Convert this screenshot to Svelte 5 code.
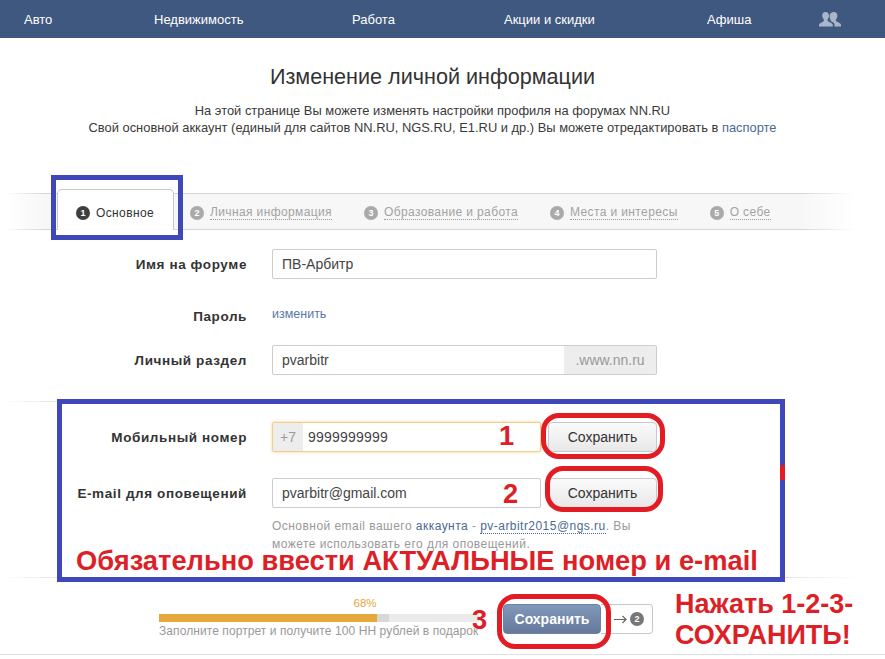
<script lang="ts">
    const navItems = [
        { label: 'Авто', width: 130 },
        { label: 'Недвижимость', width: 198 },
        { label: 'Работа', width: 152 },
        { label: 'Акции и скидки', width: 203 },
        { label: 'Афиша', width: 112 }
    ];

    const tabs = ['Личная информация', 'Образование и работа', 'Места и интересы', 'О себе'];
    const progress = 68;
</script>

<div class="page">
    <nav class="nav">
        {#each navItems as item}
            <span class="nav-item" style="width: {item.width}px">{item.label}</span>
        {/each}
        <svg class="nav-icon" width="22" height="16" viewBox="0 0 22 16" fill="#a9b6ca">
            <path d="M6.5 1c2.2 0 3.5 1.700 3.500 3.800 0 1.500-.6 2.800-1.400 3.700v1.500l4 2.200c.8.400 1.200 1 1.200 1.800v1.500H0v-1.500c0-.8.400-1.400 1.200-1.800l3.700-2.200V8.500C4 7.600 3.200 6.300 3.200 4.800 3.200 2.700 4.300 1 6.500 1z"/>
            <path d="M15 1c2.200 0 3.400 1.700 3.400 3.800 0 1.500-.7 2.800-1.500 3.700v1.500l3.900 2.200c.8.400 1.200 1 1.200 1.800v1.500h-6.500v-2c0-1-.6-1.700-1.500-2.200l-2.400-1.400V8.500c-.7-.9-1-2.200-1-3.700C10.600 2.700 12.800 1 15 1z"/>
        </svg>
    </nav>

    <header class="intro">
        <h1>Изменение личной информации</h1>
        <p>На этой странице Вы можете изменять настройки профиля на форумах NN.RU</p>
        <p>Свой основной аккаунт (единый для сайтов NN.RU, NGS.RU, E1.RU и др.) Вы можете отредактировать в <a href="#passport">паспорте</a></p>
    </header>

    <div class="tabs">
        <div class="tab active"><span class="num">1</span>Основное</div>
        {#each tabs as tab, i}
            <div class="tab"><span class="num">{i + 2}</span><span class="tab-label">{tab}</span></div>
        {/each}
    </div>

    <section class="form">
        <div class="row name">
            <div class="label">Имя на форуме</div>
            <div class="input wide"><span class="value">ПВ-Арбитр</span></div>
        </div>
        <div class="row password">
            <div class="label">Пароль</div>
            <a class="change" href="#password">изменить</a>
        </div>
        <div class="row">
            <div class="label">Личный раздел</div>
            <div class="input wide">
                <span class="value grow">pvarbitr</span>
                <span class="suffix">.www.nn.ru</span>
            </div>
        </div>
    </section>

    <div class="rule"></div>

    <section class="form contacts">
        <div class="row">
            <div class="label">Мобильный номер</div>
            <div class="input narrow focused">
                <span class="prefix">+7</span>
                <span class="value phone">9999999999</span>
            </div>
            <button class="btn" type="button">Сохранить</button>
        </div>
        <div class="row email">
            <div class="label">E-mail для оповещений</div>
            <div class="input narrow"><span class="value">pvarbitr@gmail.com</span></div>
            <button class="btn" type="button">Сохранить</button>
        </div>
        <p class="hint">Основной email вашего <a href="#account">аккаунта</a> - <a class="dotted" href="#mail">pv-arbitr2015@ngs.ru</a>. Вы<br />можете использовать его для оповещений.</p>
    </section>

    <div class="rule fade"></div>

    <footer class="footer">
        <div class="progress">
            <div class="percent" style="width: {progress}%">{progress}%</div>
            <div class="track">
                <div class="fill" style="width: {progress}%"></div>
                <div class="pending"></div>
            </div>
            <div class="progress-text">Заполните портрет и получите 100 НН рублей в подарок</div>
        </div>
        <button class="btn primary" type="button">Сохранить</button>
        <button class="btn next" type="button">
            <svg width="13" height="9" viewBox="0 0 13 9" fill="none" stroke="#666" stroke-width="1.2">
                <path d="M0 4.500h12M8.500 1l3.500 3.500L8.500 8"/>
            </svg>
            <span class="num">2</span>
        </button>
    </footer>
    <div class="bottom-line"></div>

    <!-- пометки поверх скриншота -->
    <div class="box box-tab"></div>
    <div class="box box-contacts"></div>
    <div class="tick"></div>
    <div class="oval oval-1"></div>
    <div class="oval oval-2"></div>
    <div class="oval oval-3"></div>
    <div class="mark mark-1">1</div>
    <div class="mark mark-2">2</div>
    <div class="mark mark-3">3</div>
    <div class="mark warning">Обязательно ввести АКТУАЛЬНЫЕ номер и e-mail</div>
    <div class="mark press">Нажать 1-2-3-<br />СОХРАНИТЬ!</div>
</div>

<style>
    :global(body) {
        margin: 0;
        background: #fff;
        overflow: hidden;
    }

    .page {
        position: relative;
        width: 885px;
        height: 659px;
        overflow: hidden;
        font-family: 'Liberation Sans', Arial, sans-serif;
        font-size: 12px;
        color: #333;
    }

    a {
        color: #4a6a94;
        text-decoration: none;
    }

    .nav {
        display: flex;
        align-items: center;
        height: 38px;
        padding-left: 24px;
        background: #3f5880;
        color: #fff;
    }

    .nav-item {
        flex: none;
        font-size: 13px;
    }

    .intro {
        width: 865px;
        padding-top: 27px;
        text-align: center;
        color: #3a3a3a;
    }

    h1 {
        margin: 0 0 13px;
        font-size: 21.6px;
        line-height: 24px;
        font-weight: 400;
        color: #333;
    }

    .intro p {
        margin: 0;
        font-size: 12.9px;
        line-height: 17px;
    }

    .tabs {
        display: flex;
        gap: 32px;
        align-items: flex-end;
        box-sizing: border-box;
        width: 855px;
        height: 37px;
        margin-top: 57px;
        padding-left: 57px;
        background: linear-gradient(90deg, #fff 5px, #f7f7f7 45px, #f7f7f7 800px, #fff);
        border-top: 1px solid;
        border-bottom: 1px solid;
        border-image: linear-gradient(90deg, #fff 5px, #d4d4d4 45px, #d4d4d4 800px, #fff) 1;
    }

    .tab {
        display: flex;
        align-items: center;
        gap: 6px;
        height: 35px;
        padding-top: 2px;
        box-sizing: border-box;
        font-size: 12px;
        letter-spacing: 0.38px;
        color: #a3a3a3;
    }

    .tab.active {
        width: 117px;
        height: 41px;
        margin: 0 -16px -1px 0;
        padding: 5px 0 0 18px;
        background: #fff;
        border: 1px solid #c9c9c9;
        border-bottom: none;
        border-radius: 5px 5px 0 0;
        color: #333;
    }

    .tab-label {
        border-bottom: 1px dotted #999;
        line-height: 13px;
    }

    .num {
        display: flex;
        flex: none;
        align-items: center;
        justify-content: center;
        width: 14px;
        height: 14px;
        border-radius: 50%;
        background: #aaa;
        color: #fff;
        font-size: 9px;
        font-weight: 700;
        letter-spacing: 0;
    }

    .active .num {
        background: #3f3f3f;
    }

    .form {
        padding-top: 19px;
    }

    .row {
        display: flex;
        align-items: center;
        height: 30px;
        margin-bottom: 36px;
    }

    .row.name {
        margin-bottom: 21px;
    }

    .row.password {
        margin-bottom: 15px;
        align-items: flex-start;
    }

    .row.password .label {
        line-height: 30px;
        margin-top: 2px;
    }

    .label {
        flex: none;
        box-sizing: border-box;
        width: 247px;
        margin-right: 25px;
        text-align: right;
        font-size: 13.5px;
        font-weight: 700;
        letter-spacing: 0.6px;
        color: #333;
    }

    .change {
        font-size: 12.5px;
        line-height: 30px;
        margin-top: -1px;
        color: #5a78a8;
    }

    .input {
        display: flex;
        align-items: stretch;
        box-sizing: border-box;
        height: 30px;
        background: #fff;
        border: 1px solid #ccc;
        border-radius: 2px;
        font-size: 14px;
        line-height: 28px;
        color: #444;
    }

    .input.wide {
        width: 385px;
    }

    .input.narrow {
        width: 269px;
    }

    .input.focused {
        border-color: #f3cf8e;
        box-shadow: 0 0 3px #f5c97a;
    }

    .value {
        padding-left: 9px;
    }

    .value.phone {
        padding-left: 5px;
        letter-spacing: 0.2px;
    }

    .grow {
        flex: 1;
    }

    .suffix {
        width: 92px;
        background: #ededed;
        text-align: center;
        font-size: 14px;
        color: #999;
    }

    .prefix {
        width: 30px;
        background: #ededed;
        text-align: center;
        color: #999;
    }

    .rule {
        width: 80px;
        height: 1px;
        margin-top: -10px;
        background: linear-gradient(90deg, #fff 5px, #e6e6e6 50px);
    }

    .rule.fade {
        width: 860px;
        margin-top: 0;
        background: linear-gradient(90deg, #fff 5px, #e6e6e6 50px, #e6e6e6 790px, #fff);
    }

    .contacts {
        padding-top: 20px;
        height: 155px;
    }

    .contacts .row {
        margin-bottom: 26px;
    }

    .contacts .btn {
        margin-left: auto;
        margin-right: 228px;
    }

    .btn {
        flex: none;
        box-sizing: border-box;
        width: 109px;
        height: 30px;
        padding: 0;
        border: 1px solid #c8c8c8;
        border-radius: 4px;
        background: linear-gradient(#fafafa, #e8e8e8);
        font-family: inherit;
        font-size: 14px;
        color: #333;
    }

    .hint {
        margin: -17px 0 0 272px;
        width: 390px;
        font-size: 12px;
        line-height: 18px;
        letter-spacing: 0.46px;
        color: #999;
    }

    .dotted {
        border-bottom: 1px dotted #4a6a94;
    }

    .footer {
        display: flex;
        align-items: flex-start;
        padding: 18px 0 0 159px;
    }

    .progress {
        flex: none;
        width: 320px;
        margin-right: 24px;
    }

    .percent {
        height: 14px;
        line-height: 14px;
        text-align: right;
        font-size: 11.5px;
        color: #e4a83c;
    }

    .track {
        display: flex;
        height: 8px;
        margin-top: 4px;
        background: #ebebeb;
    }

    .fill {
        background: #e4a83c;
    }

    .pending {
        width: 12px;
        background: #d8d8d8;
    }

    .progress-text {
        margin-top: 3px;
        font-size: 12px;
        line-height: 13px;
        letter-spacing: 0.08px;
        white-space: nowrap;
        color: #999;
    }

    .btn.primary {
        width: 98px;
        margin-top: 8px;
        border: 1px solid #6d83a5;
        background: linear-gradient(#8098ba, #66799a);
        font-size: 14px;
        font-weight: 700;
        color: #fff;
    }

    .btn.next {
        display: flex;
        align-items: center;
        justify-content: center;
        gap: 3px;
        width: 52px;
        margin-top: 8px;
        padding-left: 5px;
        background: #fff;
        border-left: none;
        border-radius: 0 4px 4px 0;
    }

    .next .num {
        background: #777;
    }

    .bottom-line {
        position: absolute;
        left: 0;
        right: 0;
        top: 654px;
        height: 1px;
        background: #e2e2e2;
    }

    .box {
        position: absolute;
        box-sizing: border-box;
        border: 5px solid #3f48b8;
    }

    .box-tab {
        left: 51px;
        top: 175px;
        width: 132px;
        height: 65px;
    }

    .box-contacts {
        left: 57px;
        top: 399px;
        width: 728px;
        height: 183px;
    }

    .tick {
        position: absolute;
        left: 780px;
        top: 465px;
        width: 5px;
        height: 15px;
        background: #e31b23;
    }

    .oval {
        position: absolute;
        box-sizing: border-box;
        border: 5px solid #e31b23;
        border-radius: 18px;
    }

    .oval-1 {
        left: 541px;
        top: 413px;
        width: 124px;
        height: 46px;
    }

    .oval-2 {
        left: 545px;
        top: 466px;
        width: 118px;
        height: 46px;
    }

    .oval-3 {
        left: 497px;
        top: 594px;
        width: 114px;
        height: 55px;
    }

    .mark {
        position: absolute;
        font-size: 27.3px;
        line-height: 30px;
        font-weight: 700;
        color: #dd1f27;
        white-space: nowrap;
    }

    .mark-1 {
        left: 499px;
        top: 421px;
    }

    .mark-2 {
        left: 503px;
        top: 479px;
    }

    .mark-3 {
        left: 472px;
        top: 605px;
    }

    .warning {
        left: 76px;
        top: 546px;
    }

    .press {
        left: 675px;
        top: 589px;
        line-height: 31px;
        font-size: 27px;
    }
</style>
